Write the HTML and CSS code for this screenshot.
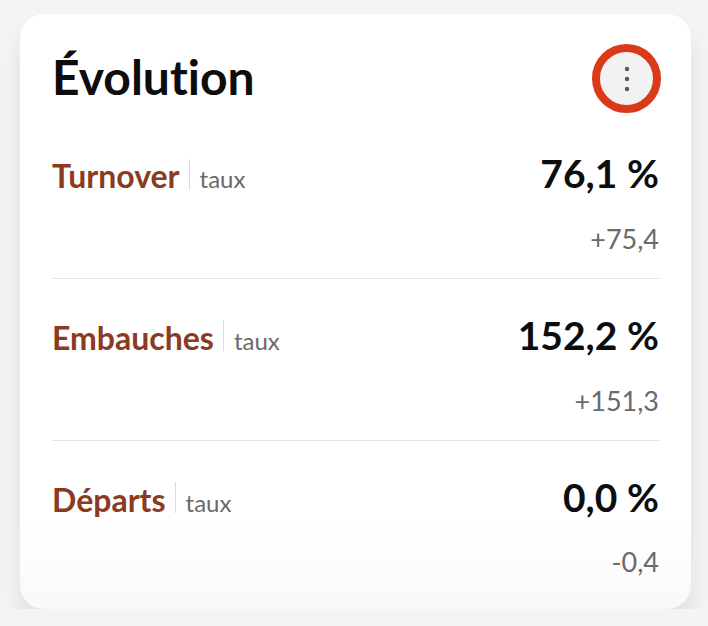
FILE: index.html
```html
<!DOCTYPE html>
<html lang="fr">
<head>
    <meta charset="UTF-8">
    <meta name="viewport" content="width=device-width, initial-scale=1.0">
    <title>Évolution</title>
    <link rel="stylesheet" href="styles.css">
</head>
<body>
    <div class="card">
        <header class="card-header">
            <h1>Évolution</h1>
            <button class="menu-btn" aria-label="Options">
                <svg width="6" height="26" viewBox="0 0 6 26">
                    <circle cx="3" cy="3" r="2.2" fill="#5a5a5a"/>
                    <circle cx="3" cy="13" r="2.2" fill="#5a5a5a"/>
                    <circle cx="3" cy="23" r="2.2" fill="#5a5a5a"/>
                </svg>
            </button>
        </header>

        <div class="metric">
            <div class="metric-main">
                <div class="metric-label">
                    <span class="name">Turnover</span>
                    <span class="sep"></span>
                    <span class="unit">taux</span>
                </div>
                <div class="value">76,1&#8239;%</div>
            </div>
            <div class="delta">+75,4</div>
        </div>

        <div class="metric">
            <div class="metric-main">
                <div class="metric-label">
                    <span class="name">Embauches</span>
                    <span class="sep"></span>
                    <span class="unit">taux</span>
                </div>
                <div class="value">152,2&#8239;%</div>
            </div>
            <div class="delta">+151,3</div>
        </div>

        <div class="metric">
            <div class="metric-main">
                <div class="metric-label">
                    <span class="name">Départs</span>
                    <span class="sep"></span>
                    <span class="unit">taux</span>
                </div>
                <div class="value">0,0&#8239;%</div>
            </div>
            <div class="delta">-0,4</div>
        </div>
    </div>
</body>
</html>
```

FILE: styles.css
```css
body {
    margin: 0;
    padding: 14px 17px 0 20px;
    background-color: #f4f4f4;
    font-family: Lato, "Open Sans", sans-serif;
    font-variant-ligatures: none;
    color: #111;
    overflow: hidden;
}

.card {
    background: linear-gradient(to bottom, #fff 85%, #f9f9f9 100%);
    border-radius: 24px;
    padding: 30px 32px 8px 32px;
    box-shadow: 0 16px 22px rgba(0,0,0,0.09);
}

.card-header {
    display: flex;
    justify-content: space-between;
    align-items: center;
    margin-bottom: 4px;
}

.card-header h1 {
    margin: 0;
    font-size: 48px;
    font-weight: 700;
    line-height: 1.2;
    color: #0d0d0d;
    position: relative;
    top: -2px;
}

.menu-btn {
    width: 69px;
    height: 69px;
    margin-right: -2px;
    border: 8px solid #da3a18;
    border-radius: 50%;
    background-color: #f2f2f2;
    display: flex;
    align-items: center;
    justify-content: center;
    padding: 0;
}

.metric {
    padding: 33px 0 24px;
    border-bottom: 1px solid #e2e2e2;
}

.metric:last-child {
    border-bottom: none;
}

.metric-main {
    display: flex;
    justify-content: space-between;
    align-items: baseline;
    line-height: 1.2;
}

.metric-label {
    display: flex;
    align-items: baseline;
}

.name {
    font-size: 32px;
    font-weight: 700;
    color: #8b3b1f;
}

.sep {
    align-self: center;
    width: 1px;
    height: 31px;
    background-color: #dcdcdc;
    margin: 0 10px 0 9px;
    position: relative;
    top: -2px;
}

.unit {
    font-size: 24px;
    color: #6a6a6a;
}

.value {
    font-size: 39px;
    font-weight: 700;
    color: #0d0d0d;
}

.delta {
    margin-top: 27px;
    text-align: right;
    font-size: 27px;
    font-weight: 400;
    line-height: 30px;
    color: #6a6a6a;
}
```
